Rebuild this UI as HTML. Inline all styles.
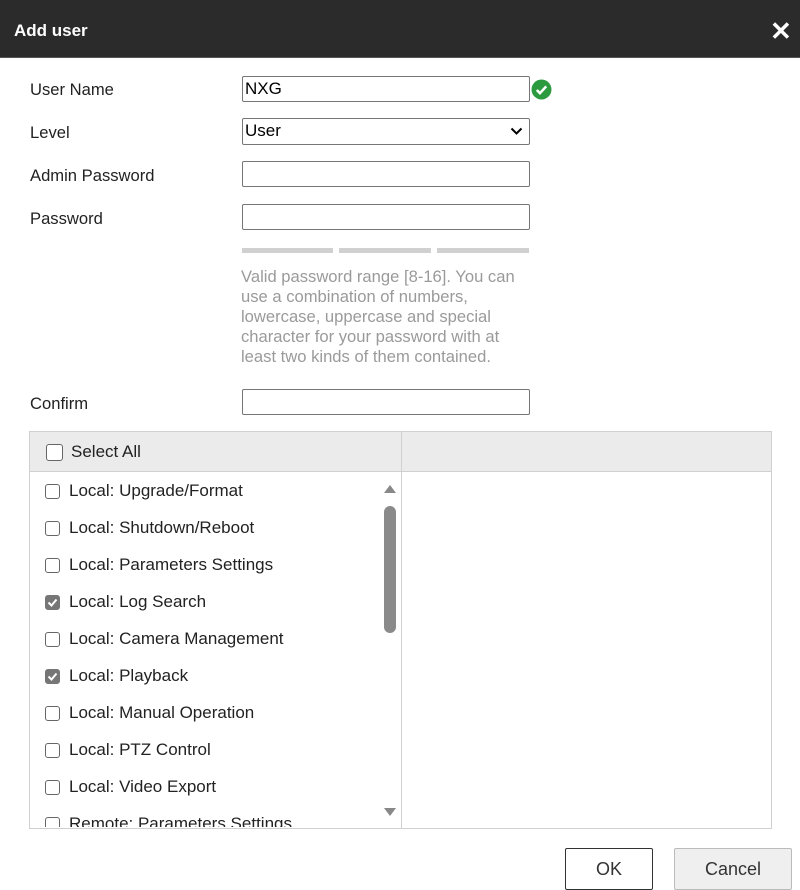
<!DOCTYPE html>
<html><head><style>
body{margin:0;width:800px;height:885px;overflow:hidden;background:#fff;font-family:"Liberation Sans",Arial,sans-serif;position:relative}
.a{position:absolute}
.hd{left:0;top:0;width:800px;height:57px;background:#2b2b2b;border-bottom:1px solid #555}
.lab{left:30px;font-size:16.6px;color:#222}
.inp{left:242px;width:284px;height:24px;border:1px solid #767676;border-radius:2px;background:#fff;font-size:17px;line-height:24px;padding-left:2px;box-sizing:content-box}
.bar{top:248px;height:5px;background:#d0d0d0}
.help{left:241px;top:267px;width:292px;font-size:16.6px;line-height:20px;color:#9a9a9a}
.cb{width:13px;height:13px;border:1px solid #666;border-radius:3px;background:#fff}
.cb.on{background:#767676;border-color:#767676}
.it{left:69px;font-size:17px;color:#222}
</style></head><body>
<div class="a" style="left:0;top:0;width:800px;height:3px;background:#444"></div>
<div class="a hd"></div>
<div class="a" style="left:14px;top:21px;color:#fff;font-weight:bold;font-size:17px">Add user</div>
<div class="a" style="left:770px;top:16px;color:#fff;font-weight:bold;font-size:26px">✕</div>

<div class="a lab" style="top:80px">User Name</div>
<div class="a inp" style="top:76px">NXG</div>
<svg class="a" style="left:531px;top:79px" width="21" height="21" viewBox="0 0 20 20"><circle cx="10" cy="10" r="9.5" fill="#2c9a3f"/><path d="M5.5 10.5l3 3 6-6.5" stroke="#fff" stroke-width="2.4" fill="none"/></svg>

<div class="a lab" style="top:123px">Level</div>
<div class="a inp" style="top:118px;height:25px">User<svg class="a" style="right:6px;top:8px" width="13" height="9" viewBox="0 0 13 9"><path d="M1.5 1.5l5 5 5-5" stroke="#000" stroke-width="2" fill="none"/></svg></div>

<div class="a lab" style="top:166px">Admin Password</div>
<div class="a inp" style="top:161px"></div>
<div class="a lab" style="top:209px">Password</div>
<div class="a inp" style="top:204px"></div>
<div class="a bar" style="left:242px;width:91px"></div>
<div class="a bar" style="left:339px;width:92px"></div>
<div class="a bar" style="left:437px;width:92px"></div>
<div class="a help">Valid password range [8-16]. You can use a combination of numbers, lowercase, uppercase and special character for your password with at least two kinds of them contained.</div>
<div class="a lab" style="top:394px">Confirm</div>
<div class="a inp" style="top:389px"></div>

<div class="a" style="left:29px;top:431px;width:741px;height:396px;border:1px solid #d0d0d0;overflow:hidden">
 <div class="a" style="left:0;top:0;width:741px;height:39px;background:#ebebeb;border-bottom:1px solid #d0d0d0"></div>
 <div class="a" style="left:371px;top:0;width:1px;height:396px;background:#d0d0d0"></div>
 <div class="a cb" style="left:16px;top:12px;width:15px;height:15px"></div>
 <div class="a it" style="left:41px;top:10px">Select All</div>
 <div class="a" style="left:354px;top:53px;width:0;height:0;border-left:6px solid transparent;border-right:6px solid transparent;border-bottom:8px solid #888"></div>
 <div class="a" style="left:354px;top:74px;width:12px;height:127px;border-radius:6px;background:#8a8a8a"></div>
 <div class="a" style="left:354px;top:376px;width:0;height:0;border-left:6px solid transparent;border-right:6px solid transparent;border-top:8px solid #888"></div>
</div>

<div class="a cb" style="left:45px;top:484px"></div><div class="a it" style="top:481px">Local: Upgrade/Format</div>
<div class="a cb" style="left:45px;top:521px"></div><div class="a it" style="top:518px">Local: Shutdown/Reboot</div>
<div class="a cb" style="left:45px;top:558px"></div><div class="a it" style="top:555px">Local: Parameters Settings</div>
<div class="a cb on" style="left:45px;top:595px"><svg width="13" height="13" style="display:block"><path d="M2.5 6.5l3 3 5-6" stroke="#fff" stroke-width="2" fill="none"/></svg></div><div class="a it" style="top:592px">Local: Log Search</div>
<div class="a cb" style="left:45px;top:632px"></div><div class="a it" style="top:629px">Local: Camera Management</div>
<div class="a cb on" style="left:45px;top:669px"><svg width="13" height="13" style="display:block"><path d="M2.5 6.5l3 3 5-6" stroke="#fff" stroke-width="2" fill="none"/></svg></div><div class="a it" style="top:666px">Local: Playback</div>
<div class="a cb" style="left:45px;top:706px"></div><div class="a it" style="top:703px">Local: Manual Operation</div>
<div class="a cb" style="left:45px;top:743px"></div><div class="a it" style="top:740px">Local: PTZ Control</div>
<div class="a cb" style="left:45px;top:780px"></div><div class="a it" style="top:777px">Local: Video Export</div>
<div class="a" style="left:30px;top:812px;width:340px;height:15px;overflow:hidden"><div class="a cb" style="left:15px;top:5px"></div><div class="a it" style="left:39px;top:2px">Remote: Parameters Settings</div></div>

<div class="a" style="left:565px;top:848px;width:86px;height:40px;border:1px solid #333;border-radius:2px;background:#fff;font-size:18px;color:#333;text-align:center;line-height:40px">OK</div>
<div class="a" style="left:674px;top:848px;width:116px;height:40px;border:1px solid #bbb;border-radius:2px;background:#efefef;font-size:18px;color:#333;text-align:center;line-height:40px">Cancel</div>
</body></html>
